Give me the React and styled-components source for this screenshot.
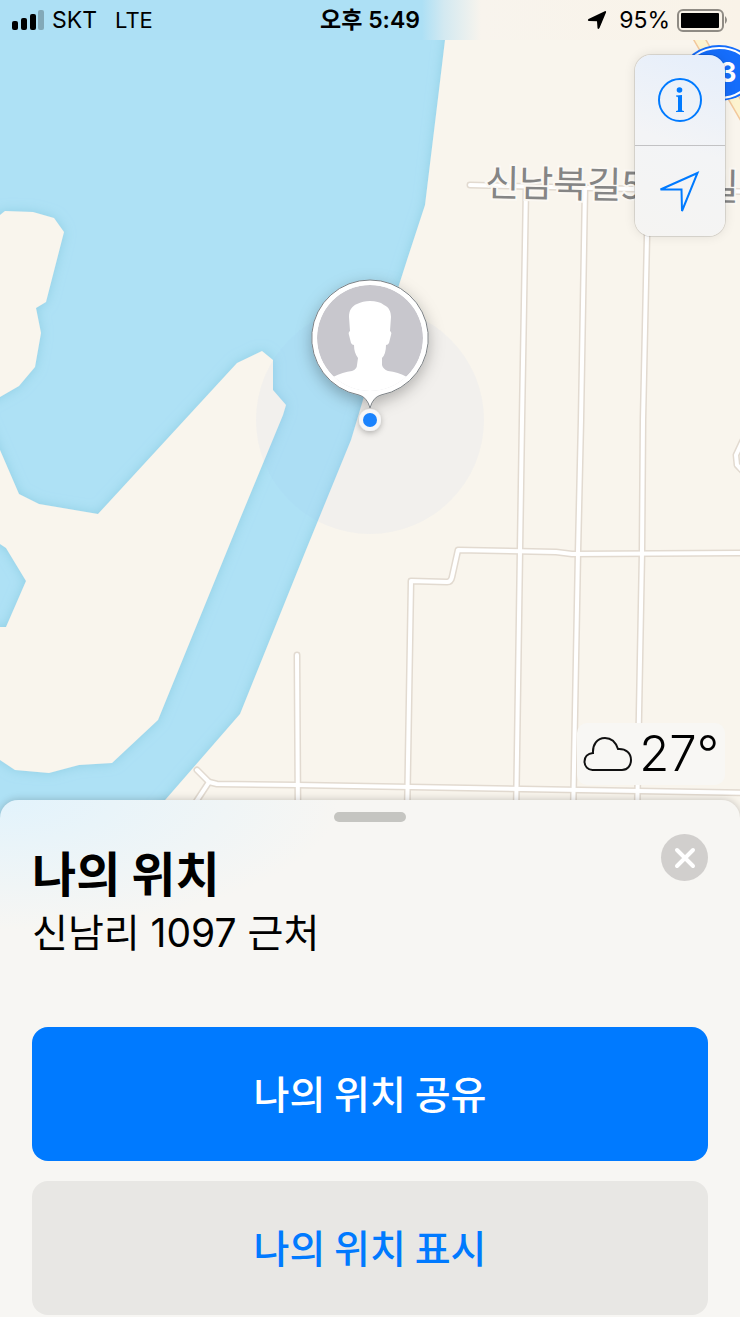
import React from "react";
import styled, { createGlobalStyle, css } from "styled-components";

const GlobalStyle = createGlobalStyle`
  *, *::before, *::after { box-sizing: border-box; }
  body {
    margin: 0;
    background: #f7f6f3;
    color: #000;
    font-family: Inter, "Noto Sans CJK KR", sans-serif;
  }
  button { font: inherit; color: inherit; border: 0; padding: 0; cursor: pointer; }
  h1, p { margin: 0; }
`;

const BLUE = "#007aff";

const Screen = styled.div`
  position: relative;
  min-height: 100vh;
  display: flex;
  flex-direction: column;
  overflow: hidden;
`;

const MapLayer = styled.svg`
  position: absolute;
  inset: 0;
  width: 100%;
  height: 100%;
`;

const RoadLabel = styled.text`
  font: 400 37px "Noto Sans CJK KR", sans-serif;
  fill: #858585;
  stroke: #fbf8f3;
  stroke-width: 4px;
  paint-order: stroke;
`;

const RouteNumber = styled.text`
  font: 700 27px Inter, sans-serif;
  fill: #fff;
`;

const StatusBar = styled.header`
  position: relative;
  height: 40px;
  padding: 0 11px;
  display: grid;
  grid-template-columns: 1fr auto 1fr;
  align-items: center;
  background: linear-gradient(90deg, #ade0f5 57%, #d3e9f1 60%, #f8f4ed 65%, #f9f3e8);
  font-size: 23px;
  line-height: 28px;
`;

const StatusGroup = styled.div`
  display: flex;
  align-items: center;
  justify-content: ${(p) => (p.$end ? "flex-end" : "flex-start")};
  gap: ${(p) => (p.$end ? "6px" : "8px")};
`;

const Network = styled.span`
  margin-left: 10px;
  font-size: 22px;
`;

const Clock = styled.time`
  font-weight: 600;
`;

const ChargeLevel = styled.span`
  margin-left: 6px;
`;

const MapArea = styled.main`
  position: relative;
  flex: 1;
  min-height: 320px;
  padding: 15px;
  display: flex;
  flex-direction: column;
  align-items: flex-end;
  justify-content: space-between;
`;

const Controls = styled.div`
  width: 90px;
  display: flex;
  flex-direction: column;
  border-radius: 16px;
  overflow: hidden;
  background: linear-gradient(200deg, #e5eefb, #f3f4f6 50%, #f5f4f2);
  box-shadow: 0 0 0 1px rgba(0, 0, 0, 0.1), 0 0 12px rgba(0, 0, 0, 0.1);
`;

const ControlButton = styled.button`
  height: 90px;
  display: grid;
  place-items: center;
  background: transparent;
  color: ${BLUE};
  & + & {
    height: 91px;
    border-top: 1px solid #c2c2c4;
  }
`;

const Weather = styled.div`
  height: 62px;
  padding: 0 6px;
  display: flex;
  align-items: center;
  gap: 6px;
  border-radius: 10px;
  background: #f8f7f4;
  font-size: 49px;
  font-weight: 300;
  line-height: 62px;
`;

const Sheet = styled.section`
  position: relative;
  padding: 12px 32px 2px;
  border-radius: 18px 18px 0 0;
  background:
    radial-gradient(ellipse 340px 130px at 0 0, #e2f3fc, rgba(226, 243, 252, 0)),
    #f7f6f3;
  box-shadow: 0 0 8px rgba(0, 0, 0, 0.22);
`;

const Grabber = styled.div`
  width: 72px;
  height: 10px;
  margin: 0 auto 12px;
  border-radius: 5px;
  background: #c5c5c1;
`;

const SheetHeader = styled.header`
  display: flex;
  align-items: flex-start;
  justify-content: space-between;
`;

const Heading = styled.div`
  padding-top: 9px;
  display: grid;
  gap: 6px;
  line-height: 56px;
`;

const Title = styled.h1`
  font-family: "Noto Sans CJK KR", sans-serif;
  font-size: 48px;
  font-weight: 700;
`;

const Address = styled.p`
  font-size: 39px;
`;

const CloseButton = styled.button`
  width: 47px;
  height: 47px;
  display: grid;
  place-items: center;
  border-radius: 50%;
  background: #d1cfcd;
`;

const Actions = styled.div`
  margin-top: 66px;
  display: grid;
  gap: 20px;
`;

const ActionButton = styled.button`
  height: 134px;
  padding-bottom: 4px;
  border-radius: 16px;
  font-family: "Noto Sans CJK KR", sans-serif;
  font-size: 39px;
  font-weight: 500;
  ${(p) =>
    p.$primary
      ? css`
          background: ${BLUE};
          color: #fff;
        `
      : css`
          background: #e8e7e4;
          color: ${BLUE};
        `}
`;

const ROADS = [
  "M470 185 L760 192",
  "M526 187 L522 420 L520 550 L516 820",
  "M585 188 L581 420 L578 552 L573 820",
  "M648 190 L643 420 L642 552 L637 820",
  "M407 820 L411 581 L447 582 Q451 582 452 577 L458 550 L556 552 L572 554 L760 553",
  "M197 770 L209 782 L217 784 L297 785 L760 793",
  "M209 782 L190 811",
  "M297 655 L298 820",
  "M750 425 L736 455 L737 465 L750 479",
];

const LAND = [
  "M-30 215 L0 215 L5 211 L33 212 L54 218 L64 232 L46 302 L36 308 L41 333 L35 367 L19 386 L0 397 L-30 412 Z",
  "M-30 380 L0 450 L19 494 L39 504 L98 514 L237 363 L262 351 L273 360 L273 390 L286 405 L283 415 L240 519 L158 720 L112 763 L79 765 L49 773 L15 770 L0 760 L-30 740 L-30 627 L6 627 L26 581 L6 548 L0 544 L-30 530 Z",
  "M448 0 L445 40 L439 90 L425 205 L407 260 L399 285 L363 400 L351 440 L306 550 L240 714 L166 799 L130 840 L130 1340 L800 1340 L800 0 Z",
];

function MapDrawing() {
  return (
    <MapLayer viewBox="0 0 740 1317" preserveAspectRatio="xMidYMin slice" aria-hidden="true">
      <defs>
        <filter id="shore" x="-20%" y="-20%" width="140%" height="140%">
          <feDropShadow dx="0" dy="0" stdDeviation="6" floodColor="#86c9de" floodOpacity="0.75" />
        </filter>
        <filter id="lift" x="-40%" y="-40%" width="180%" height="190%">
          <feDropShadow dx="0" dy="5" stdDeviation="8" floodColor="#000" floodOpacity="0.28" />
        </filter>
        <filter id="dotLift" x="-100%" y="-100%" width="300%" height="300%">
          <feDropShadow dx="0" dy="2" stdDeviation="3" floodColor="#000" floodOpacity="0.28" />
        </filter>
        <clipPath id="pinFace">
          <circle cx="370" cy="338" r="53" />
        </clipPath>
      </defs>

      <rect x="-30" width="800" height="1317" fill="#aee1f5" />
      <g fill="#f9f5ed" filter="url(#shore)">
        {LAND.map((d) => (
          <path key={d} d={d} />
        ))}
      </g>

      <g fill="none" strokeLinecap="round" strokeLinejoin="round">
        <path d="M697 35 L757 138" stroke="#f2c89c" strokeWidth="12" />
        <path d="M697 35 L757 138" stroke="#fdf3cf" strokeWidth="9" />
        <g stroke="#e2dad0" strokeWidth="7">
          {ROADS.map((d) => (
            <path key={d} d={d} />
          ))}
        </g>
        <g stroke="#fff" strokeWidth="4">
          {ROADS.map((d) => (
            <path key={d} d={d} />
          ))}
        </g>
      </g>

      <ellipse cx="719" cy="73" rx="36" ry="28" fill="#156dfb" />
      <ellipse cx="719" cy="73" rx="33" ry="25" fill="none" stroke="#fff" strokeWidth="2" />
      <RouteNumber x="719" y="82">3</RouteNumber>
      <RoadLabel x="485" y="196" transform="rotate(1 485 196)">신남북길51 번길</RoadLabel>

      <circle cx="370" cy="420" r="114" fill="#95bcee" fillOpacity="0.07" />
      <g filter="url(#lift)">
        <path
          d="M370 280 A58 58 0 0 1 381 395 Q373 397 370 408 Q367 397 359 395 A58 58 0 0 1 370 280 Z"
          fill="#fff"
          stroke="#7d8286"
          strokeWidth="1"
        />
      </g>
      <g clipPath="url(#pinFace)">
        <circle cx="370" cy="338" r="53" fill="#c8c7cd" />
        <path
          d="M370 301 C376 301 380 302 384 305 C389 307 391 312 391 317 L390 331 Q392 332 391 335 L389 343 Q388 345 386 345 Q386 354 382 358 L382 365 Q383 369 388 371 Q398 372 407 377 L420 400 H320 L333 377 Q343 372 352 371 Q357 369 357 365 L358 358 Q354 353 354 345 Q352 345 351 343 L349 335 Q348 332 350 331 L349 317 C349 310 352 306 357 304 C361 302 365 301 370 301 Z"
          fill="#fff"
        />
      </g>
      <circle cx="370" cy="420" r="11" fill="#f6f6f7" filter="url(#dotLift)" />
      <circle cx="370" cy="420" r="7" fill="#1982fd" />
    </MapLayer>
  );
}

function SignalIcon() {
  return (
    <svg width="33" height="20" viewBox="0 0 33 20" role="img" aria-label="신호 세기">
      <rect x="1" y="11" width="6" height="9" rx="2" />
      <rect x="10" y="8" width="6" height="12" rx="2" />
      <rect x="19" y="4" width="6" height="16" rx="2" />
      <rect x="27" y="0" width="6" height="20" rx="2" fill="#83a9b8" />
    </svg>
  );
}

function StatusArrowIcon() {
  return (
    <svg width="20" height="20" viewBox="0 0 20 20" aria-hidden="true">
      <path d="M18.300 1 Q19.500 1 19 2.500 L12.500 18 Q11 20 10.500 18 L10 11.300 L2 11 Q0 10.500 1.500 9 Z" />
    </svg>
  );
}

function BatteryIcon() {
  return (
    <svg width="53" height="24" viewBox="0 0 53 24" role="img" aria-label="배터리">
      <rect x="2" y="2" width="45" height="21" rx="5" fill="none" stroke="#8f8b84" strokeWidth="2" />
      <rect x="5" y="5" width="38" height="15" rx="1" />
      <path d="M49 8 Q53 12 49 16 Z" fill="#8f8b84" />
    </svg>
  );
}

function InfoIcon() {
  return (
    <svg width="44" height="44" viewBox="0 0 44 44" fill="currentColor" aria-hidden="true">
      <circle cx="22" cy="22" r="21" fill="none" stroke="currentColor" strokeWidth="2" />
      <circle cx="21.500" cy="12" r="2.800" />
      <path d="M18 17.500 L24 17 V32 Q24 33 26 33 V34 H18 V33 Q20 33 20 32 V19.500 Q20 18.500 18 18.500 Z" />
    </svg>
  );
}

function LocateIcon() {
  return (
    <svg width="44" height="44" viewBox="0 0 44 44" fill="none" stroke="currentColor" strokeWidth="2" aria-hidden="true">
      <path d="M39.500 4 L2.500 20.500 H23.500 L24 42 Z" />
    </svg>
  );
}

function CloudIcon() {
  return (
    <svg width="50" height="36" viewBox="0 0 50 36" fill="none" stroke="#111" strokeWidth="2" role="img" aria-label="흐림">
      <path d="M9.500 34 H39 C45 34 48 29 48 24 C48 17 43 12.500 35 13 C32.500 5.500 28 2 22 2 C14 2 9.500 8.500 10 17 C4.500 17.500 1.500 21 1.500 25.500 C1.500 30.500 5 34 9.500 34 Z" />
    </svg>
  );
}

export default function App() {
  return (
    <>
      <GlobalStyle />
      <Screen>
        <MapDrawing />
        <StatusBar>
          <StatusGroup>
            <SignalIcon />
            <span>SKT</span>
            <Network>LTE</Network>
          </StatusGroup>
          <Clock>오후 5:49</Clock>
          <StatusGroup $end>
            <StatusArrowIcon />
            <ChargeLevel>95%</ChargeLevel>
            <BatteryIcon />
          </StatusGroup>
        </StatusBar>

        <MapArea>
          <Controls>
            <ControlButton type="button" aria-label="정보">
              <InfoIcon />
            </ControlButton>
            <ControlButton type="button" aria-label="현재 위치">
              <LocateIcon />
            </ControlButton>
          </Controls>
          <Weather>
            <CloudIcon />
            <span>27°</span>
          </Weather>
        </MapArea>

        <Sheet>
          <Grabber />
          <SheetHeader>
            <Heading>
              <Title>나의 위치</Title>
              <Address>신남리 1097 근처</Address>
            </Heading>
            <CloseButton type="button" aria-label="닫기">
              <svg width="22" height="22" viewBox="0 0 22 22" stroke="#fff" strokeWidth="4" strokeLinecap="round" aria-hidden="true">
                <path d="M3 3 L19 19 M19 3 L3 19" />
              </svg>
            </CloseButton>
          </SheetHeader>
          <Actions>
            <ActionButton type="button" $primary>
              나의 위치 공유
            </ActionButton>
            <ActionButton type="button">나의 위치 표시</ActionButton>
          </Actions>
        </Sheet>
      </Screen>
    </>
  );
}
